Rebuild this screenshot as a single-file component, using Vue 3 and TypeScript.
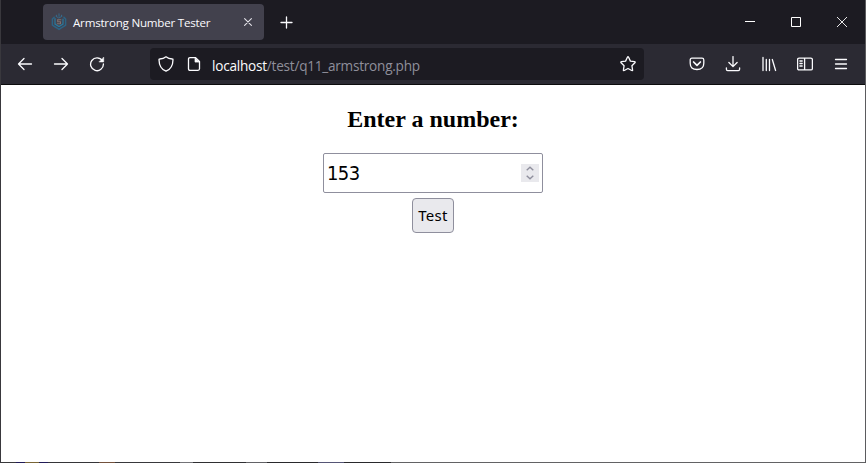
<script setup lang="ts">
import { ref } from 'vue'

const tabTitle = 'Armstrong Number Tester'
const host = 'localhost'
const path = '/test/q11_armstrong.php'
const value = ref<string>('153')

function step(delta: number): void {
  value.value = String(Number(value.value) + delta)
}
</script>

<template>
  <div class="window">
    <header class="titlebar">
      <div class="tab">
        <svg class="favicon" width="16" height="18" viewBox="0 0 16 18" fill="none" stroke-linecap="round">
          <path d="M3.2 4.2 1.4 6v6.2L8 16.3l6.6-4.1V6l-1.8-1.8" stroke="#2c6384" stroke-width="1.5" stroke-dasharray="4 .8" />
          <path d="M4 5.5v5.6L8 13.6l4-2.5V6" stroke="#287a9f" stroke-width="1.2" />
          <path d="M5 3.3 7.8 5 11 3.3M8 .8v2.5M5.6 2.2v1M10.5 2.2v1" stroke="#35698a" stroke-width="1" />
          <path d="M9.9 6.7H6.7v2.1h2.8v2H6.3" stroke="#80706e" stroke-width="1.1" />
        </svg>
        <span class="tab-title">{{ tabTitle }}</span>
        <svg class="tab-close" width="8" height="8" viewBox="0 0 8 8" stroke="#e4e3ea" stroke-width="1.1" stroke-linecap="round"><path d="m.6.6 6.8 6.8M7.4.6.6 7.4" /></svg>
      </div>
      <svg class="new-tab" width="13" height="13" viewBox="0 0 13 13" stroke="#fbfbfe" stroke-width="1.3" stroke-linecap="round"><path d="M6.5 1v11M1 6.5h11" /></svg>
      <div class="window-controls">
        <svg width="10" height="10" viewBox="0 0 10 10" stroke="#fff"><path d="M0 4.5h10" /></svg>
        <svg width="10" height="10" viewBox="0 0 10 10" fill="none" stroke="#fff"><path d="M.5.5h9v9h-9z" /></svg>
        <svg width="10" height="10" viewBox="0 0 10 10" stroke="#fff" stroke-width=".9"><path d="m0 0 10 10M10 0 0 10" /></svg>
      </div>
    </header>

    <nav class="toolbar">
      <div class="nav-buttons">
        <svg class="icon" viewBox="0 0 16 16"><path d="M14.5 8H1.5M7 2.5 1.5 8 7 13.5" /></svg>
        <svg class="icon" viewBox="0 0 16 16"><path d="M1.5 8h13M9 2.5 14.5 8 9 13.5" /></svg>
        <svg class="icon" viewBox="0 0 16 16"><path d="M13.3 4.7A6.4 6.4 0 1 0 14.4 8" /><path d="M14.7 1.5v4.4h-4.4z" fill="#fbfbfe" stroke-width=".6" /></svg>
      </div>
      <div class="address">
        <svg class="icon shield" viewBox="0 0 16 16"><path d="M8 .8C6.2 2.3 4 2.9 1.6 3c-.5 0-.6.3-.6.7C1.1 9.2 3.4 13.4 8 15.2c4.6-1.8 6.9-6 7-11.5 0-.4-.1-.7-.6-.7C12 2.9 9.8 2.3 8 .8z" /></svg>
        <svg class="icon page" viewBox="0 0 16 16"><path d="M4 1.7h5.6L13.5 5.5v7.3q0 1.5-1.5 1.5H4q-1.5 0-1.5-1.5V3.2q0-1.5 1.5-1.5z" /><path d="M9 1.9v4.2h4.3z" fill="#fbfbfe" stroke-width=".7" /></svg>
        <span class="url"><span class="host">{{ host }}</span>{{ path }}</span>
        <svg class="icon star" viewBox="0 0 16 16"><path d="M7.4 1.3q.6-1.1 1.2 0l1.8 3.8 4.1.6q1.1.2.4 1l-3 3 .7 4.2q.2 1-.9.6L8 12.5l-3.7 2q-1.1.4-.9-.6l.7-4.2-3-3q-.7-.8.4-1l4.1-.6z" /></svg>
      </div>
      <div class="actions">
        <svg class="icon" viewBox="0 0 16 16"><path d="M3 2.2h10q1.8 0 1.8 1.8v3.3q0 6.2-6.8 6.2T1.2 7.3V4Q1.2 2.2 3 2.2z" /><path d="m4.6 6 3.4 3.3L11.4 6" stroke-width="1.7" /></svg>
        <svg class="icon" viewBox="0 0 16 16"><path d="M8 .6v9.8M3.9 6.5 8 10.6l4.1-4.1M1.4 11.8v1.5q0 1.3 1.3 1.3h10.6q1.3 0 1.3-1.3v-1.5" /></svg>
        <svg class="icon" viewBox="0 0 16 16"><path d="M2 1.5v13M5.3 3.5v11M8.5 3.5v11M11.3 3.5l3.3 11" /></svg>
        <svg class="icon" viewBox="0 0 16 16"><path d="M2.1 2.1h11.8q1.5 0 1.5 1.5v8.8q0 1.5-1.5 1.5H2.1q-1.5 0-1.5-1.5V3.6q0-1.5 1.5-1.5zM7.6 2.1v11.8M2.9 5h2.3M2.9 7.5h2.3M2.9 10h2.3" /></svg>
        <svg class="icon" viewBox="0 0 16 16"><path d="M2.5 3.5h11M2.5 8h11M2.5 12.5h11" /></svg>
      </div>
    </nav>

    <main class="page-content">
      <h2>Enter a number:</h2>
      <form @submit.prevent>
        <div class="number-field">
          <input v-model="value" type="text" inputmode="numeric">
          <div class="spinner">
            <button type="button" @click="step(1)"><svg width="8" height="5" viewBox="0 0 8 5"><path d="m.7 4.2 3.3-3 3.3 3" /></svg></button>
            <button type="button" @click="step(-1)"><svg width="8" height="5" viewBox="0 0 8 5"><path d="m.7.8 3.3 3 3.3-3" /></svg></button>
          </div>
        </div>
        <button class="submit" type="submit">Test</button>
      </form>
    </main>
    <div class="bottom-edge"></div>
  </div>
</template>

<style>
body { margin: 0; overflow: hidden; }
</style>

<style scoped>
* { box-sizing: border-box; }
svg { display: block; flex: none; }
.window {
  width: 866px;
  height: 463px;
  display: flex;
  flex-direction: column;
  background: #fff;
  border-left: 1px solid #39383d;
  border-right: 1px solid #5b5b5e;
  font-family: "Open Sans", "Noto Sans", sans-serif;
}
.titlebar {
  height: 44px;
  flex: none;
  display: flex;
  align-items: center;
  padding-left: 42px;
  background: #1c1b22;
}
.tab {
  width: 221px;
  height: 36px;
  display: flex;
  align-items: center;
  padding: 0 12px 0 8px;
  border-radius: 4px;
  background: #42414d;
  color: #fbfbfe;
}
.tab-title {
  margin-left: 6px;
  padding-top: 1px;
  font-size: 11.6px;
  letter-spacing: -0.22px;
  white-space: nowrap;
}
.tab-close { margin-left: auto; }
.new-tab { margin-left: 16px; }
.window-controls {
  display: flex;
  gap: 36px;
  margin-left: auto;
  padding-right: 18px;
}
.toolbar {
  height: 41px;
  flex: none;
  display: flex;
  align-items: center;
  background: #2b2a33;
  border-bottom: 1px solid #0c0c0d;
}
.icon {
  width: 16px;
  height: 16px;
  fill: none;
  stroke: #fbfbfe;
  stroke-width: 1.3;
  stroke-linecap: round;
  stroke-linejoin: round;
}
.nav-buttons { display: flex; gap: 20px; padding-left: 16px; }
.address {
  width: 494px;
  height: 32px;
  display: flex;
  align-items: center;
  margin-left: 45px;
  padding: 0 8px;
  border-radius: 4px;
  background: #1c1b22;
}
.page { margin-left: 12px; }
.url {
  margin-left: 10px;
  padding-top: 2px;
  color: #8f8f9b;
  font-size: 13.6px;
  letter-spacing: -0.24px;
  white-space: nowrap;
}
.host { color: #fbfbfe; }
.star { margin-left: auto; }
.actions { display: flex; gap: 20px; margin-left: auto; padding-right: 16px; }
.page-content { flex: 1; text-align: center; }
h2 {
  margin: 20px 0;
  font: bold 24px/28px "Liberation Serif", serif;
}
form { display: flex; flex-direction: column; align-items: center; gap: 5px; }
.number-field {
  width: 220px;
  height: 40px;
  display: flex;
  align-items: center;
  padding: 0 3px;
  border: 1px solid #8f8f9d;
  border-radius: 2px;
}
input {
  min-width: 0;
  flex: 1;
  height: 36px;
  padding: 0;
  border: 0;
  outline: 0;
  background: none;
  color: #000;
  font: 20px "DejaVu Sans Condensed", "Noto Sans", sans-serif;
  letter-spacing: -0.6px;
}
.spinner { width: 18px; height: 18px; background: #e9e9ed; }
.spinner button {
  width: 18px;
  height: 9px;
  display: flex;
  align-items: center;
  justify-content: center;
  padding: 0;
  border: 0;
  background: none;
}
.spinner path { fill: none; stroke: #8f8f9d; stroke-width: 1.4; }
.submit {
  width: 42px;
  height: 35px;
  padding: 0 0 2px;
  border: 1px solid #8f8f9d;
  border-radius: 4px;
  background: #e9e9ed;
  color: #000;
  font: 15px "Noto Sans", sans-serif;
  letter-spacing: 0.3px;
}
.bottom-edge {
  height: 1px;
  flex: none;
  background: linear-gradient(90deg, #38383b 15px, #211b57 15px 24px, #796536 24px 38px, #211b57 38px 47px, #353538 47px 98px, #73513c 98px 114px, #38383b 114px 179px, #737377 179px 192px, #2f2f32 192px 245px, #626266 245px 266px, #29292c 266px 317px, #555575 317px 343px, #29292c 343px 390px, #626264 390px);
}
</style>
